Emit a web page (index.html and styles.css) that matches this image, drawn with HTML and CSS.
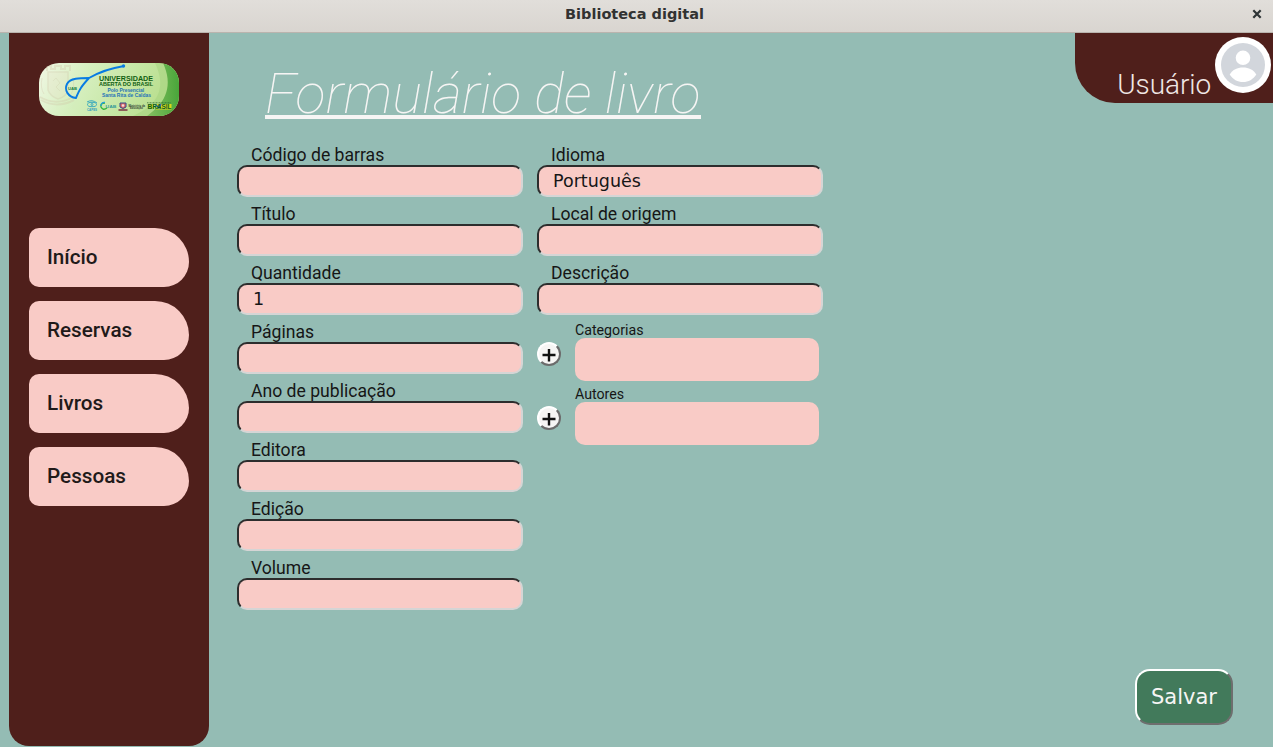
FILE: index.html
```
<!DOCTYPE html>
<html lang="pt-BR">
<head>
<meta charset="utf-8">
<title>Biblioteca digital</title>
<link rel="stylesheet" href="styles.css">
</head>
<body>
<header class="titlebar">
  <span class="titlebar-text">Biblioteca digital</span>
  <svg class="close" viewBox="0 0 10 10"><path d="M1.300 1.300 8.700 8.700M8.700 1.300 1.300 8.700"/></svg>
</header>
<div class="app">
  <aside class="sidebar">
    <svg class="logo" viewBox="0 0 140 53">
      <defs>
        <linearGradient id="base" x1="0" x2="1" y1="0.3" y2="0.5">
          <stop offset="0" stop-color="#edf6df"/><stop offset=".3" stop-color="#d6efbf"/><stop offset="1" stop-color="#b5dd88"/>
        </linearGradient>
        <linearGradient id="edge" x1="0" x2="1"><stop offset="0" stop-color="#86c061"/><stop offset="1" stop-color="#49a53a"/></linearGradient>
      </defs>
      <rect width="140" height="53" fill="url(#base)"/>
      <path d="M116 0H140V53H94C119 42 128 25 116 0Z" fill="#a6d480" opacity=".55"/>
      <path d="M124 0H140V53H108C128 39 134 22 124 0Z" fill="url(#edge)"/>
      <g fill="none" stroke="#ccb99f" opacity=".28">
        <path d="M9 9H29V27Q27 34 19 36Q11 33 9 27Z" fill="#e4dfc4" stroke-width="1.500"/>
        <path d="M8 8V3h4v3h4V3h6v3h4V3h5v5M1 34Q18 44 36 33M2 37Q18 46 35 37" stroke-width="2"/>
        <path d="M14 18l3-3 4 5-4 4 4 4M3 15q-2 10 2 16M34 15q2 10-2 16"/>
      </g>
      <path d="M85 3C66 6 57 11 50 15C40 26 40 28 37 35C29 34 25 27 28 21C31 15 41 15 50 15" fill="none" stroke="#087be3" stroke-width="1.900"/>
      <circle cx="84.500" cy="3" r="1.700" fill="#087be3"/>
      <g class="logo-text">
        <text x="29" y="27" font-size="3.500" textLength="9" lengthAdjust="spacingAndGlyphs" fill="#178244">UAB</text>
        <text x="60" y="18" font-size="6.600" textLength="54" lengthAdjust="spacingAndGlyphs" fill="#116012">UNIVERSIDADE</text>
        <text x="60" y="23.200" font-size="5" textLength="54" lengthAdjust="spacingAndGlyphs" fill="#116012">ABERTA DO BRASIL</text>
        <text x="68.500" y="29.300" font-size="4.800" textLength="36.500" lengthAdjust="spacingAndGlyphs" fill="#2674b8">Polo Presencial</text>
        <text x="63" y="34" font-size="4.800" textLength="49" lengthAdjust="spacingAndGlyphs" fill="#2674b8">Santa Rita de Caldas</text>
        <text x="48" y="47.900" font-size="3.300" textLength="10" lengthAdjust="spacingAndGlyphs" fill="#299ac0">CAPES</text>
        <text x="66.500" y="45" font-size="4.200" textLength="11" lengthAdjust="spacingAndGlyphs" fill="#369b99">UAB</text>
        <text x="89.500" y="43.700" font-size="2.800" textLength="16.500" lengthAdjust="spacingAndGlyphs" fill="#354535">Ministério da</text>
        <text x="91" y="46.200" font-size="2.800" textLength="13" lengthAdjust="spacingAndGlyphs" fill="#354535">Educação</text>
        <path d="M109 41h6v5h-6zM117 41h15.500v5.500H117z" fill="#d9d51d"/>
        <path d="M117 42l3 3 2-4" fill="none" stroke="#376bb8" stroke-width="1.500"/>
        <text x="108.500" y="46.200" font-size="6.800" textLength="24" lengthAdjust="spacingAndGlyphs" fill="#075f27">BRASIL</text>
      </g>
      <path d="M108 39.800h24" stroke="#295f2a" stroke-width=".7" stroke-dasharray="1 .5"/>
      <g fill="none" stroke="#3ba9bd"><ellipse cx="53" cy="41.500" rx="4.500" ry="2.200"/><circle cx="53" cy="41.500" r="1"/><path d="M48 39q5-3 10 1"/></g>
      <path d="M66 40q-5 0-4 4 2 4 6 1" fill="none" stroke="#39b83b" stroke-width="1.500"/>
      <path d="M62 43q0-4 4-3.500" fill="none" stroke="#259ee0" stroke-width="1.300"/>
      <path d="M81 40h6v4q-3 3-6 0z" fill="#dd6b68" stroke="#364b88"/><path d="M79.500 47h9" stroke="#7a3040" stroke-width="1.300"/><circle cx="84" cy="42.500" r="1.200" fill="#f5dede"/>
    </svg>
    <nav class="menu">
      <a class="menu-item">Início</a>
      <a class="menu-item">Reservas</a>
      <a class="menu-item">Livros</a>
      <a class="menu-item">Pessoas</a>
    </nav>
  </aside>
  <main class="content">
    <div class="top">
      <h1 class="heading">Formulário de livro</h1>
      <div class="user">
        <span class="user-name">Usuário</span>
        <svg class="avatar" viewBox="0 0 56 56">
          <circle cx="28" cy="28" r="28" fill="#fff"/><circle cx="28" cy="28" r="22" fill="#d2d6dc"/>
          <circle cx="28" cy="20.800" r="7.300" fill="#fff"/>
          <path d="M14.700 37.500C18 32.500 22 30.500 28 30.500S38 32.500 41.300 37.500C38 42.500 33.500 45 28 45S18 42.500 14.700 37.500Z" fill="#fff"/>
        </svg>
      </div>
    </div>
    <form class="form">
      <div class="column">
        <label class="field"><span class="label">Código de barras</span><input class="input"></label>
        <label class="field"><span class="label">Título</span><input class="input"></label>
        <label class="field"><span class="label">Quantidade</span><input class="input" value="1"></label>
        <label class="field"><span class="label">Páginas</span><input class="input"></label>
        <label class="field"><span class="label">Ano de publicação</span><input class="input"></label>
        <label class="field"><span class="label">Editora</span><input class="input"></label>
        <label class="field"><span class="label">Edição</span><input class="input"></label>
        <label class="field"><span class="label">Volume</span><input class="input"></label>
      </div>
      <div class="column">
        <label class="field"><span class="label">Idioma</span><input class="input" value="Português"></label>
        <label class="field"><span class="label">Local de origem</span><input class="input"></label>
        <label class="field"><span class="label">Descrição</span><input class="input"></label>
        <div class="picker">
          <button type="button" class="add" aria-label="Adicionar categoria"><svg class="plus" viewBox="0 0 14 14"><path d="M7 1V13.500M.5 7H13.500"/></svg></button>
          <div class="group"><span class="group-label">Categorias</span><div class="list"></div></div>
        </div>
        <div class="picker">
          <button type="button" class="add" aria-label="Adicionar autor"><svg class="plus" viewBox="0 0 14 14"><path d="M7 1V13.500M.5 7H13.500"/></svg></button>
          <div class="group"><span class="group-label">Autores</span><div class="list"></div></div>
        </div>
      </div>
    </form>
    <div class="actions"><button type="button" class="save">Salvar</button></div>
  </main>
</div>
</body>
</html>
```
FILE: styles.css
```
* { box-sizing: border-box; }
body {
  margin: 0;
  height: 747px;
  display: flex;
  flex-direction: column;
  overflow: hidden;
  background: #94bcb4;
  color: #161616;
  font-family: Roboto, sans-serif;
}
.titlebar {
  flex: none;
  height: 33px;
  display: grid;
  grid-template-columns: 1fr auto 1fr;
  align-items: center;
  padding: 0 11px 4px 7px;
  background: linear-gradient(#e1deda, #d9d5d0);
  border-bottom: 1px solid #bab4ae;
}
.titlebar-text {
  grid-column: 2;
  font: bold 14.5px/18px "DejaVu Sans", sans-serif;
  color: #323232;
}
.close { width: 10px; height: 10px; justify-self: end; stroke: #2e3436; stroke-width: 2.2; fill: none; }
.app { flex: 1; display: flex; padding-left: 9px; min-height: 0; }
.sidebar {
  flex: none;
  width: 200px;
  height: 713px;
  padding: 30px 20px 0;
  background: #4f1f1b;
  border-radius: 0 0 20px 20px;
}
.logo { display: block; width: 140px; height: 53px; margin: 0 10px; border-radius: 20px; }
.logo-text { font-family: "Liberation Sans", sans-serif; font-weight: bold; }
.menu { display: flex; flex-direction: column; gap: 14px; margin-top: 112px; }
.menu-item {
  height: 59px;
  padding-left: 18px;
  border-radius: 10px 34px 25px 10px;
  background: #f9cbc6;
  font-size: 20.7px;
  font-weight: 500;
  line-height: 58px;
  color: #211a19;
}
.content { flex: 1; display: flex; flex-direction: column; min-width: 0; }
.top { display: flex; justify-content: space-between; align-items: flex-start; height: 113px; }
.heading {
  height: 58px;
  margin: 28px 0 0 56px;
  border-bottom: 4px solid #f6f5f4;
  font-size: 56px;
  font-weight: 100;
  font-style: italic;
  line-height: 66px;
  white-space: nowrap;
  color: #f6f5f4;
}
.user {
  width: 198px;
  height: 70px;
  display: flex;
  justify-content: flex-end;
  padding: 4px 2px 0 0;
  gap: 4px;
  background: #4f1f1b;
  border-radius: 0 0 0 40px;
}
.user-name {
  margin-top: 29px;
  font-size: 28px;
  font-weight: 300;
  line-height: 37px;
  letter-spacing: -0.1px;
  color: #f0e7e5;
}
.avatar { width: 56px; height: 56px; }
.form { display: flex; gap: 14px; padding-left: 28px; }
.column { width: 286px; }
.field { display: block; height: 59px; }
.label {
  display: block;
  height: 19px;
  padding-left: 14px;
  font-size: 17.6px;
  line-height: 18px;
}
.input {
  display: block;
  width: 286px;
  height: 32px;
  padding: 0 14px;
  border: 2px solid;
  border-color: #2d2d2d #d5d5d5 #d5d5d5 #2d2d2d;
  border-radius: 10px;
  background: #f9cbc6;
  font: 17.5px "DejaVu Sans", sans-serif;
  color: #161616;
}
.picker { display: flex; gap: 14px; height: 64px; }
.add {
  width: 24px;
  height: 24px;
  margin-top: 19px;
  padding: 0;
  display: grid;
  place-items: center;
  border: 2px solid;
  border-color: #fff #6b6b6b #6b6b6b #fff;
  border-radius: 50%;
  background: #f6f5f4;
}
.plus { width: 14px; height: 14px; margin: 2px 0 0; stroke: #111; stroke-width: 2.4; }
.group-label {
  display: block;
  height: 15px;
  font-size: 14.2px;
  line-height: 15px;
}
.list { width: 244px; height: 43px; border-radius: 10px; background: #f9cbc6; }
.actions { display: flex; justify-content: flex-end; margin-top: auto; padding: 0 40px 22px 0; }
.save {
  width: 98px;
  height: 56px;
  padding: 0;
  border: 2px solid;
  border-color: #fff #6e6e6e #6e6e6e #fff;
  border-radius: 15px;
  background: #427a5b;
  color: #f6f5f4;
  font: 21px "DejaVu Sans", sans-serif;
}
```
